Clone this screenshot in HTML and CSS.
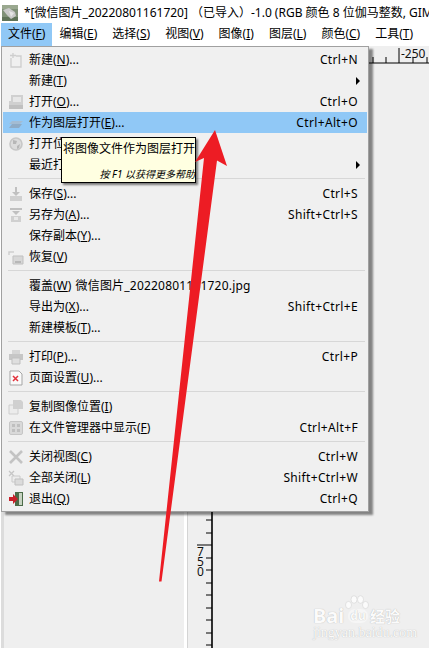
FILE: index.html
```html
<!DOCTYPE html>
<html lang="zh-CN">

<head>
    <meta charset="UTF-8">
    <title>GIMP 文件菜单</title>
    <link rel="stylesheet" href="styles.css">
</head>

<body>
    <header class="titlebar">
        <svg class="app-icon" width="16" height="16" viewBox="0 0 16 16">
            <rect width="16" height="16" fill="#7f9077"></rect>
            <rect y="0" width="16" height="4" fill="#9aa88f"></rect>
            <rect y="12" width="16" height="4" fill="#5f7358"></rect>
            <path d="M1 5 L7 3 L13 7 L14 11 L9 14 L5 10 Z" fill="#c9c9c9"></path>
            <path d="M7 6 L12 8 L9 12 Z" fill="#e6e6e6"></path>
        </svg>
        <span class="title-text">*[微信图片_20220801161720]<span class="title-gap">（已导入）-1.0 (RGB 颜色 8 位伽马整数, GIMP 内置 sRGB, 1 个图层) 1080x1920 – GIMP</span></span>
    </header>

    <nav class="menubar">
        <span class="menubar-item active">文件(<u>F</u>)</span>
        <span class="menubar-item">编辑(<u>E</u>)</span>
        <span class="menubar-item">选择(<u>S</u>)</span>
        <span class="menubar-item">视图(<u>V</u>)</span>
        <span class="menubar-item">图像(<u>I</u>)</span>
        <span class="menubar-item">图层(<u>L</u>)</span>
        <span class="menubar-item">颜色(<u>C</u>)</span>
        <span class="menubar-item">工具(<u>T</u>)</span>
    </nav>

    <main class="workspace">
        <div class="dock-edge"></div>
        <div class="dock"></div>
        <div class="sash"></div>
        <div class="canvas">
            <svg class="hruler" width="241" height="18" viewBox="0 0 241 18">
                <path d="M0 17H241M185 17v-6M198 17v-6M211 17V2M225 17v-6M239 17v-6" stroke="#000" fill="none"></path>
                <text x="213" y="12" class="ruler-text">-250</text>
            </svg>
            <svg class="vruler" width="26" height="584" viewBox="0 0 26 584">
                <path d="M24 0V584" stroke="#000" stroke-width="1.6" fill="none"></path>
                <path d="M18 456H24M18 469H24M9 481H24M18 494H24M18 506H24M18 519H24M18 531H24M18 544H24M18 556H24M18 569H24M18 581H24" stroke="#000" fill="none"></path>
                <text x="9" y="492" class="ruler-text">7</text>
                <text x="9" y="502" class="ruler-text">5</text>
                <text x="9" y="512" class="ruler-text">0</text>
            </svg>
        </div>

        <div class="menu">
            <div class="item">
                <svg class="icon dim" viewBox="0 0 16 16" fill="none" stroke="#c6c6c6" stroke-width="1.3"><path d="M3 6V15H13V4H8M5 1V6M2 3.5H8"></path></svg>
                <span class="label">新建(<u>N</u>)...</span><span class="accel">Ctrl+N</span>
            </div>
            <div class="item">
                <span class="icon"></span>
                <span class="label">新建(<u>T</u>)</span><span class="submenu"></span>
            </div>
            <div class="item">
                <svg class="icon dim" viewBox="0 0 16 16"><path d="M3 1H15V11H1V7H3Z" fill="#c9c9c9"></path><path d="M5 3H13V8H5Z" fill="#e6e6e6"></path><path d="M1 11H15V15H1Z" fill="#b5b5b5"></path></svg>
                <span class="label">打开(<u>O</u>)...</span><span class="accel">Ctrl+O</span>
            </div>
            <div class="item selected">
                <svg class="icon dim" viewBox="0 0 16 16"><path d="M4 6H15L12 9H1Z" fill="#a8bacb"></path><path d="M4 9H14L11 13H1Z" fill="#8fa5ba"></path></svg>
                <span class="label">作为图层打开(<u>E</u>)...</span><span class="accel">Ctrl+Alt+O</span>
            </div>
            <div class="item">
                <svg class="icon dim" viewBox="0 0 16 16"><circle cx="8" cy="8" r="6" fill="#d8d8d8" stroke="#bdbdbd" stroke-width="1.6"></circle><path d="M5 4L9 5L8 8L5 8ZM9 10L12 8L11 12L9 13Z" fill="#a9a9a9"></path></svg>
                <span class="label">打开位置(<u>L</u>)...</span>
            </div>
            <div class="item">
                <span class="icon"></span>
                <span class="label">最近打开(<u>R</u>)</span><span class="submenu"></span>
            </div>
            <div class="separator"></div>
            <div class="item">
                <svg class="icon dim" viewBox="0 0 16 16"><path d="M7 1H9V6H12L8 10L4 6H7Z" fill="#b5b5b5"></path><path d="M2 10H14V15H2Z" fill="#c9c9c9"></path></svg>
                <span class="label">保存(<u>S</u>)...</span><span class="accel">Ctrl+S</span>
            </div>
            <div class="item">
                <svg class="icon dim" viewBox="0 0 16 16"><path d="M2 1H14V3H2ZM4 4H12L8 8Z" fill="#b5b5b5"></path><path d="M3 9H13V15H3Z" fill="#c9c9c9"></path><path d="M6 10H10V13H6Z" fill="#e8e8e8"></path></svg>
                <span class="label">另存为(<u>A</u>)...</span><span class="accel">Shift+Ctrl+S</span>
            </div>
            <div class="item">
                <span class="icon"></span>
                <span class="label">保存副本(<u>Y</u>)...</span>
            </div>
            <div class="item">
                <svg class="icon dim" viewBox="0 0 16 16"><path d="M1 6V3H6" fill="none" stroke="#c6c6c6" stroke-width="1.4"></path><path d="M5 7H15V15H5Z" fill="#d2d2d2" stroke="#b5b5b5"></path><path d="M7 12H13V14H7Z" fill="#a9a9a9"></path></svg>
                <span class="label">恢复(<u>V</u>)</span>
            </div>
            <div class="separator"></div>
            <div class="item">
                <span class="icon"></span>
                <span class="label">覆盖(<u>W</u>) <span class="filename">微信图片_20220801161720.jpg</span></span>
            </div>
            <div class="item">
                <span class="icon"></span>
                <span class="label">导出为(<u>X</u>)...</span><span class="accel">Shift+Ctrl+E</span>
            </div>
            <div class="item">
                <span class="icon"></span>
                <span class="label">新建模板(<u>T</u>)...</span>
            </div>
            <div class="separator"></div>
            <div class="item">
                <svg class="icon dim" viewBox="0 0 16 16"><path d="M4 1H12V5H4Z" fill="#d0d0d0"></path><path d="M1 5H15V11H1Z" fill="#bcbcbc"></path><path d="M4 9H12V15H4Z" fill="#dcdcdc" stroke="#b5b5b5"></path></svg>
                <span class="label">打印(<u>P</u>)...</span><span class="accel">Ctrl+P</span>
            </div>
            <div class="item">
                <svg class="icon" viewBox="0 0 16 16"><path d="M2 1H11L14 4V15H2Z" fill="#fafafa" stroke="#a5a5a5"></path><path d="M5 6L10 11M10 6L5 11" stroke="#e2323c" stroke-width="1.5"></path></svg>
                <span class="label">页面设置(<u>U</u>)...</span>
            </div>
            <div class="separator"></div>
            <div class="item">
                <svg class="icon dim" viewBox="0 0 16 16"><path d="M1 6H10V15H1Z" fill="#ececec" stroke="#c6c6c6"></path><path d="M5 1H13L15 3V10H5Z" fill="#c9c9c9"></path></svg>
                <span class="label">复制图像位置(<u>I</u>)</span>
            </div>
            <div class="item">
                <svg class="icon dim" viewBox="0 0 16 16"><rect x="1.5" y="1.5" width="13" height="13" rx="1.5" fill="#d4d4d4" stroke="#bcbcbc"></rect><path d="M4 4H7V7H4ZM9 4H12V7H9ZM4 9H7V12H4ZM9 9H12V12H9Z" fill="#b4b4b4"></path></svg>
                <span class="label">在文件管理器中显示(<u>F</u>)</span><span class="accel">Ctrl+Alt+F</span>
            </div>
            <div class="separator"></div>
            <div class="item">
                <svg class="icon dim" viewBox="0 0 16 16"><path d="M2 2L14 14M14 2L2 14" stroke="#b9b9b9" stroke-width="2.6"></path></svg>
                <span class="label">关闭视图(<u>C</u>)</span><span class="accel">Ctrl+W</span>
            </div>
            <div class="item">
                <svg class="icon dim" viewBox="0 0 16 16"><path d="M1 1L6 6M6 1L1 6" stroke="#bcbcbc" stroke-width="1.3"></path><path d="M4 6H12V12H4Z" fill="#ececec" stroke="#c2c2c2"></path><path d="M7 9H15V15H7Z" fill="#d6d6d6" stroke="#b5b5b5"></path></svg>
                <span class="label">全部关闭(<u>L</u>)</span><span class="accel">Shift+Ctrl+W</span>
            </div>
            <div class="item">
                <svg class="icon" viewBox="0 0 16 16"><path d="M7 1H15V15H7Z" fill="#4b6b48"></path><path d="M11 2H14V14H11Z" fill="#c7d3c2"></path><path d="M1 6H5V3L10 8L5 13V10H1Z" fill="#c9202a"></path></svg>
                <span class="label">退出(<u>Q</u>)</span><span class="accel">Ctrl+Q</span>
            </div>
        </div>

        <div class="tooltip">
            <div>将图像文件作为图层打开</div>
            <div class="tooltip-hint">按 F1 以获得更多帮助</div>
        </div>

        <div class="watermark">
            <svg class="paw" width="24" height="16" viewBox="0 0 24 16" fill="#fbfbfb" stroke="#d4d4d4" stroke-width=".6">
                <ellipse cx="3.5" cy="10" rx="3" ry="3.6"></ellipse>
                <ellipse cx="9" cy="4.5" rx="3" ry="3.8"></ellipse>
                <ellipse cx="15.5" cy="4.5" rx="3" ry="3.8"></ellipse>
                <ellipse cx="20.5" cy="10" rx="3" ry="3.6"></ellipse>
            </svg>
            <div class="wm-main"><span class="wm-bai">Bai</span><span class="wm-du">du</span><span class="wm-cn">经验</span></div>
            <div class="wm-url">jingyan.baidu.com</div>
        </div>

        <svg class="arrow" width="429" height="602" viewBox="0 0 429 602">
            <path d="M215 84L227 120L217 114.500L161.500 535.500L159 535.500L204 112L195 116Z" fill="#ed1c24"></path>
        </svg>
    </main>
</body>

</html>
```

FILE: styles.css
```css
html,
body {
    margin: 0;
    padding: 0;
    height: 100%;
    overflow: hidden;
}

body {
    display: flex;
    flex-direction: column;
    background-color: white;
    color: #000;
    font-family: "Noto Sans", "Noto Sans CJK SC", sans-serif;
    font-size: 12px;
    line-height: 16px;
}

u {
    text-underline-offset: 1px;
}

.titlebar {
    height: 23px;
    display: flex;
    align-items: center;
    gap: 6px;
    padding: 2px 0 0 2px;
    box-sizing: border-box;
    overflow: hidden;
    white-space: nowrap;
}

.title-gap {
    margin-left: 3px;
}

.app-icon {
    flex: none;
}

.menubar {
    height: 23px;
    display: flex;
    padding-left: 1px;
    white-space: nowrap;
}

.menubar-item {
    padding: 3px 7px 0;
    margin-right: 1px;
    flex: none;
}

.menubar-item.active {
    margin-right: 0;
    background-color: #90c8f6;
}

.workspace {
    position: relative;
    flex: 1;
    display: flex;
    background-color: #efefef;
}

.dock-edge {
    width: 4px;
    background-color: #dcdcdc;
    border-left: 1px solid white;
    box-sizing: border-box;
}

.dock {
    width: 181px;
}

.sash {
    width: 3px;
    background-color: white;
    border-right: 1px solid #d4d4d4;
}

.canvas {
    flex: 1;
    display: flex;
    flex-direction: column;
    align-items: flex-start;
}

.hruler,
.vruler {
    display: block;
    flex: none;
}

.ruler-text {
    font-family: "Noto Sans", sans-serif;
    font-size: 12px;
    fill: #111;
}

.menu {
    position: absolute;
    top: 0;
    left: 1px;
    width: 368px;
    height: 466px;
    box-sizing: border-box;
    padding: 2px 1px;
    background-color: #f0f0f0;
    border: 1px solid #a0a0a0;
    box-shadow: 4px 3px 2px rgba(0, 0, 0, .45);
}

.item {
    height: 21px;
    display: flex;
    align-items: center;
    padding: 0 9px 0 5px;
    white-space: nowrap;
}

.item.selected {
    background-color: #90c8f6;
}

.icon {
    width: 16px;
    height: 16px;
    margin-right: 5px;
    flex: none;
}

.icon.dim {
    opacity: .8;
}

.label {
    flex: 1;
}

.filename {
    margin-left: 1px;
    letter-spacing: .2px;
}

.accel {
    letter-spacing: .35px;
}

.submenu {
    width: 0;
    height: 0;
    border-left: 4px solid #000;
    border-top: 4px solid transparent;
    border-bottom: 4px solid transparent;
    margin-right: -2px;
}

.separator {
    height: 1px;
    margin: 3px 2px 4px 5px;
    background-color: #d7d7d7;
}

.tooltip {
    position: absolute;
    top: 91px;
    left: 61px;
    width: 135px;
    height: 46px;
    box-sizing: border-box;
    padding: 3px 0 0 1px;
    background-color: #ffffe1;
    border: 1px solid #000;
    box-shadow: 2px 2px 2px rgba(0, 0, 0, .5);
    display: flex;
    flex-direction: column;
    justify-content: space-between;
    white-space: nowrap;
}

.tooltip-hint {
    font-size: 10px;
    font-style: italic;
    text-align: right;
    line-height: 14px;
    margin-bottom: 1px;
}

.watermark {
    position: absolute;
    left: 313px;
    top: 549px;
    width: 90px;
    color: #fbfbfb;
    text-shadow: 0 0 1px #a8a8a8;
}

.paw {
    display: block;
    margin-left: 32px;
}

.wm-main {
    display: flex;
    align-items: center;
    height: 16px;
    margin-top: -3px;
    font-weight: bold;
}

.wm-bai {
    font-size: 20px;
    width: 35px;
}

.wm-du {
    font-size: 12px;
    width: 20px;
    height: 14px;
    line-height: 13px;
    text-align: center;
    border-radius: 7px;
    background-color: #f6f6f6;
    margin-right: 2px;
}

.wm-cn {
    font-size: 15px;
}

.wm-url {
    font-family: "Liberation Serif", serif;
    font-size: 14px;
    line-height: 14px;
    margin-top: 2px;
    white-space: nowrap;
}

.arrow {
    position: absolute;
    top: 0;
    left: 0;
    pointer-events: none;
}
```
